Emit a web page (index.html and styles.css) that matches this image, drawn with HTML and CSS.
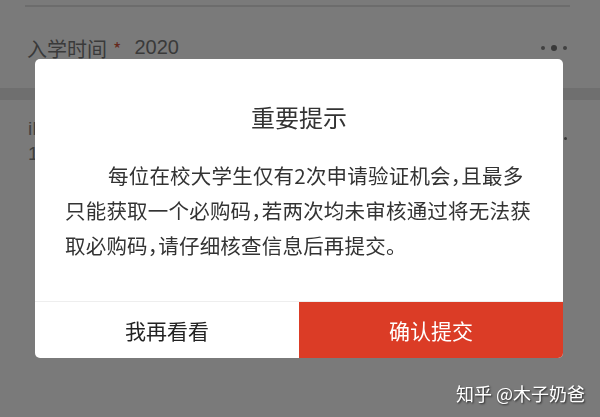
FILE: index.html
```html
<!DOCTYPE html>
<html lang="zh-CN">
<head>
<meta charset="utf-8">
<title>重要提示</title>
<link rel="stylesheet" href="styles.css">
</head>
<body>
<div class="page">
  <div class="row row-cut"></div>
  <div class="row row-field">
    <span class="label">入学时间</span><span class="star">*</span><span class="value">2020</span>
    <span class="more"><i></i><i class="big"></i><i></i></span>
  </div>
  <div class="band"></div>
  <div class="row row-info">
    <div class="info-line">iPhone 12 Pro</div>
    <div class="info-line">128GB</div>
    <span class="dot"></span>
  </div>
</div>
<div class="mask"></div>
<div class="dialog">
  <div class="title">重要提示</div>
  <p class="body">每位在校大学生仅有2次申请验证机会，且最多只能获取一个必购码，若两次均未审核通过将无法获取必购码，请仔细核查信息后再提交。</p>
  <div class="actions">
    <div class="btn btn-cancel">我再看看</div>
    <div class="btn btn-ok">确认提交</div>
  </div>
</div>
<div class="mark">知乎 @木子奶爸</div>
</body>
</html>
```

FILE: styles.css
```css
html, body {
  margin: 0;
  padding: 0;
}
body {
  width: 600px;
  height: 417px;
  overflow: hidden;
  background: #ffffff;
  font-family: "Noto Sans CJK SC", "Noto Sans", sans-serif;
  color: #222;
}
.page {
  display: flex;
  flex-direction: column;
}
.row-cut {
  height: 5px;
  margin: 0 30px 0 25px;
  border-bottom: 2px solid #e2e2e2;
}
.row-field {
  height: 81px;
  padding: 0 33px 0 27px;
  display: flex;
  align-items: center;
  font-size: 20px;
  color: #7a7a7a;
  box-sizing: border-box;
}
.label {
  color: #7a7a7a;
  padding-top: 1px;
}
.star {
  color: #d5583f;
  margin: 0 13px 0 6px;
  font-size: 18px;
}
.value {
  font-family: "Liberation Sans", Arial, sans-serif;
  color: #7a7a7a;
  font-size: 20px;
}
.more {
  margin-left: auto;
  display: flex;
  align-items: center;
  gap: 6px;
}
.more i {
  display: block;
  width: 4px;
  height: 4px;
  border-radius: 50%;
  background: #888;
}
.more i.big {
  width: 6px;
  height: 6px;
  background: #777;
}
.band {
  height: 12px;
  background: #e8e8e8;
}
.row-info {
  position: relative;
  padding: 16px 0 0 28px;
  font-size: 19px;
  line-height: 25px;
  color: #888;
  font-family: "Liberation Sans", Arial, sans-serif;
}
.dot {
  position: absolute;
  left: 564px;
  top: 37px;
  width: 3px;
  height: 3px;
  border-radius: 50%;
  background: #777;
}
.mask {
  position: fixed;
  inset: 0;
  background: rgba(0, 0, 0, 0.52);
}
.dialog {
  position: fixed;
  left: 35px;
  top: 59px;
  width: 528px;
  height: 299px;
  background: #fff;
  border-radius: 5px;
  overflow: hidden;
  display: flex;
  flex-direction: column;
}
.title {
  margin-top: 41px;
  height: 34px;
  line-height: 34px;
  text-align: center;
  font-size: 24px;
  color: #333;
}
.body {
  margin: 24px 0 0;
  padding: 0 31px 0 30px;
  font-size: 20.5px;
  line-height: 35px;
  letter-spacing: 0.2px;
  text-indent: 43px;
  font-feature-settings: "halt";
  color: #333;
  flex: 1;
}
.actions {
  height: 56px;
  border-top: 1px solid #eeeeee;
  display: flex;
}
.btn {
  flex: 1;
  display: flex;
  align-items: center;
  justify-content: center;
  font-size: 21px;
}
.btn-cancel {
  color: #222;
}
.btn-ok {
  background: #db3c26;
  color: #fff;
}
.mark {
  position: fixed;
  right: 15px;
  bottom: 12px;
  font-size: 18px;
  line-height: 24px;
  color: #fff;
  text-shadow: 1px 1px 2px rgba(0, 0, 0, 0.7);
}
```
